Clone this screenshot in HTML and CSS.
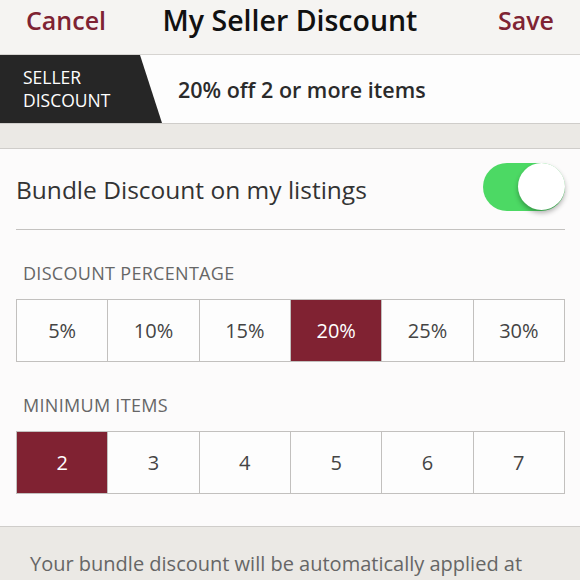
FILE: index.html
```html
<!DOCTYPE html>
<html lang="en">
<head>
    <meta charset="UTF-8">
    <title>My Seller Discount</title>
    <link rel="stylesheet" href="styles.css">
</head>
<body>
<div class="nav-bar">
    <span class="nav-link">Cancel</span>
    <span class="nav-title">My Seller Discount</span>
    <span class="nav-link save">Save</span>
</div>

<div class="promo-bar">
    <div class="promo-tag">SELLER<br>DISCOUNT</div>
    <div class="promo-text">20% off 2 or more items</div>
</div>

<div class="spacer-band"></div>

<div class="settings-card">
    <div class="toggle-row">
        <span class="toggle-label">Bundle Discount on my listings</span>
        <div class="switch on"><div class="knob"></div></div>
    </div>

    <div class="section-label">DISCOUNT PERCENTAGE</div>
    <div class="choice-grid">
        <div class="choice">5%</div>
        <div class="choice">10%</div>
        <div class="choice">15%</div>
        <div class="choice selected">20%</div>
        <div class="choice">25%</div>
        <div class="choice">30%</div>
    </div>

    <div class="section-label">MINIMUM ITEMS</div>
    <div class="choice-grid">
        <div class="choice selected">2</div>
        <div class="choice">3</div>
        <div class="choice">4</div>
        <div class="choice">5</div>
        <div class="choice">6</div>
        <div class="choice">7</div>
    </div>
</div>

<div class="info-band">
    <p class="info-text">Your bundle discount will be automatically applied at</p>
</div>
</body>
</html>
```

FILE: styles.css
```css
/* page base */
body {
    margin: 0;
    font-family: "Open Sans", Lato, sans-serif;
    background: #ebe9e5;
    color: #333;
}

/* top navigation */
.nav-bar {
    height: 55px;
    display: grid;
    grid-template-columns: 1fr auto 1fr;
    align-items: center;
    padding: 0 26px 14px 26px;
    box-sizing: border-box;
    background: #f5f4f2;
    border-bottom: 1px solid #d6d4d1;
}
.nav-link {
    font-size: 25px;
    font-weight: 600;
    color: #7e2333;
}
.nav-link.save {
    text-align: right;
}
.nav-title {
    font-size: 28.5px;
    font-weight: 600;
    color: #111;
}

/* seller discount strip */
.promo-bar {
    height: 68px;
    display: flex;
    align-items: center;
    background: #fdfdfd;
    border-bottom: 1px solid #cfcdca;
}
.promo-tag {
    width: 162px;
    height: 100%;
    padding-left: 23px;
    box-sizing: border-box;
    display: flex;
    align-items: center;
    background: #262626;
    color: #fff;
    font-size: 17.5px;
    line-height: 23px;
    clip-path: polygon(0 0, 140px 0, 162px 100%, 0 100%);
}
.promo-text {
    margin-left: 16px;
    font-size: 21.5px;
    font-weight: 600;
    color: #2b2b2b;
}

.spacer-band {
    height: 24px;
    border-bottom: 1px solid #cfcdca;
}

/* main card */
.settings-card {
    background: #fcfbfb;
    padding: 0 15px 32px 16px;
    border-bottom: 1px solid #cfcdca;
}
.toggle-row {
    height: 80px;
    display: flex;
    justify-content: space-between;
    align-items: center;
    border-bottom: 1px solid #c4c2c0;
}
.toggle-label {
    font-size: 24.5px;
    color: #333;
}

/* ios style switch */
.switch {
    width: 82px;
    height: 48px;
    border-radius: 24px;
    background: #4cd964;
    display: flex;
    justify-content: flex-end;
    margin-top: -4px;
}
.knob {
    width: 47px;
    height: 47px;
    border-radius: 50%;
    background: #fff;
    box-shadow: 0 3px 5px rgba(0, 0, 0, 0.3);
}

.section-label {
    padding: 33px 0 16px 7px;
    font-size: 18px;
    letter-spacing: 0.3px;
    line-height: 20px;
    color: #666;
}

/* option buttons */
.choice-grid {
    display: grid;
    grid-template-columns: repeat(6, 1fr);
    border: 1px solid #c2c0be;
    border-right: none;
    background: #fdfdfd;
}
.choice {
    height: 61px;
    display: flex;
    justify-content: center;
    align-items: center;
    border-right: 1px solid #c2c0be;
    font-size: 20px;
    color: #444;
}
.choice.selected {
    background: #802232;
    color: #fff;
}

/* bottom note */
.info-band {
    padding: 23px 30px;
}
.info-text {
    margin: 0;
    font-size: 20px;
    color: #666;
}
```
